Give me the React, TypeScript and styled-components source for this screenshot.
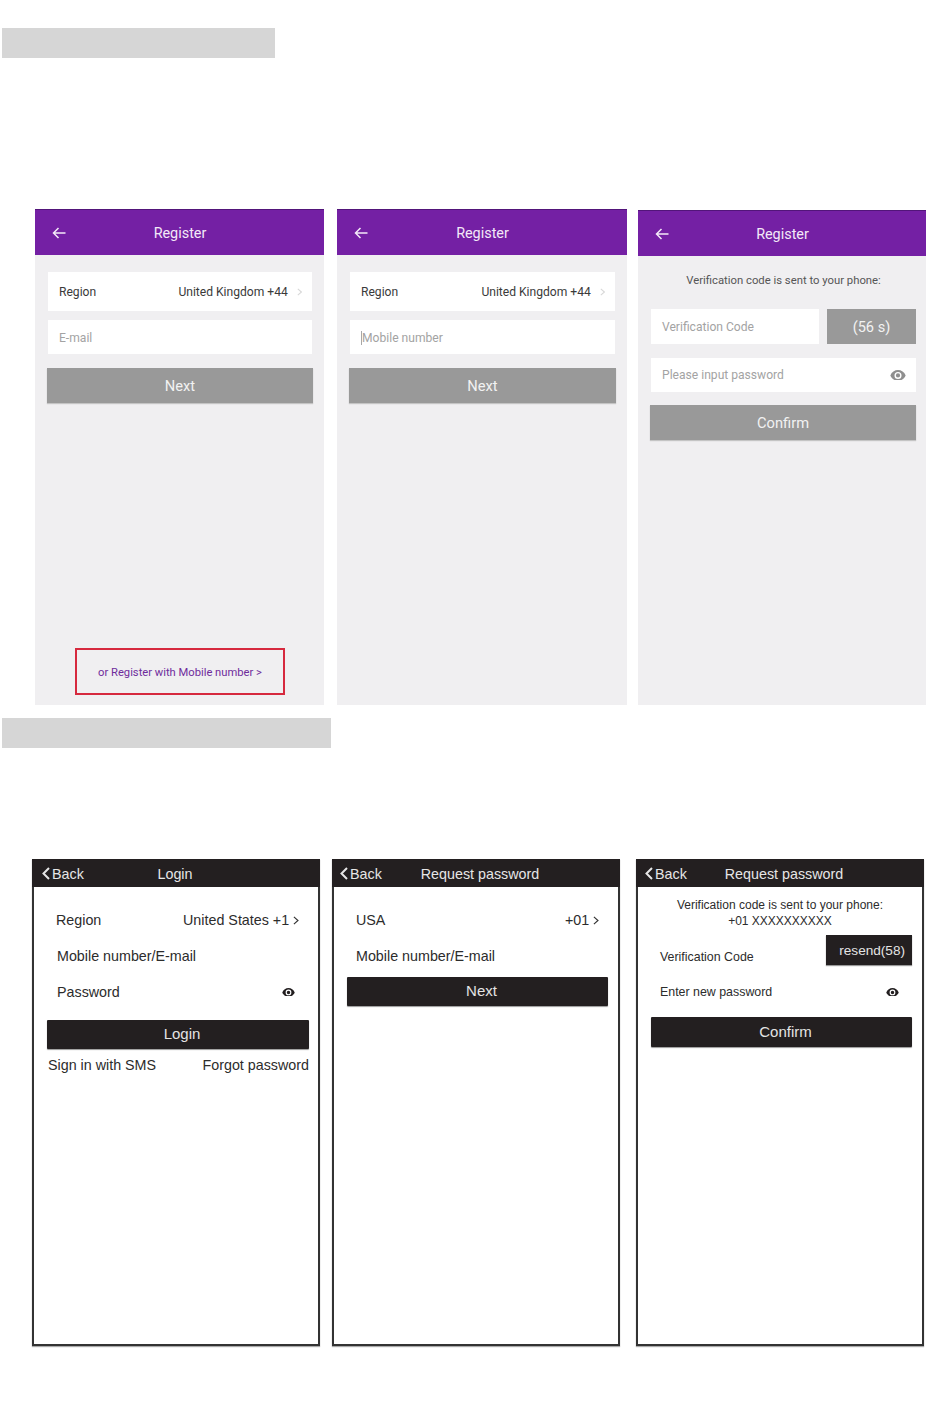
import React from "react";
import styled, { createGlobalStyle } from "styled-components";

const GlobalStyle = createGlobalStyle`
  body {
    margin: 0;
    background: #fff;
  }
`;

const Page = styled.div`
  width: 950px;
  height: 1409px;
  padding-top: 28px;
  box-sizing: border-box;
  overflow: hidden;
`;

const SectionBar = styled.div<{ $width: number }>`
  width: ${(p) => p.$width}px;
  height: 30px;
  margin-left: 2px;
  background: #d6d6d6;
`;

const PurpleRow = styled.div`
  display: flex;
  align-items: flex-start;
  margin: 151px 0 13px 35px;
  font-family: Roboto, "Liberation Sans", sans-serif;
`;

const BlackRow = styled.div`
  display: flex;
  margin: 111px 0 0 32px;
  font-family: "Liberation Sans", Arial, sans-serif;
`;

const PurpleScreen = styled.div<{ $width: number; $gap: number; $top?: number }>`
  position: relative;
  width: ${(p) => p.$width}px;
  height: ${(p) => 496 - (p.$top ?? 0)}px;
  margin-top: ${(p) => p.$top ?? 0}px;
  margin-right: ${(p) => p.$gap}px;
  flex: none;
  background: #f0eff1;
`;

const PurpleHeader = styled.div`
  display: grid;
  grid-template-columns: 1fr auto 1fr;
  align-items: center;
  height: 46px;
  padding-left: 17px;
  padding-right: 17px;
  box-sizing: border-box;
  background: #7420a4;
  border-top: 1px solid #52157a;
  color: #f3e9f8;
  font-size: 14.4px;
`;

const PurpleTitle = styled.span`
  padding: 1px 0 0 1px;
`;

const Stack = styled.div<{ $top: number; $right?: number }>`
  display: flex;
  flex-direction: column;
  padding: ${(p) => p.$top}px ${(p) => p.$right ?? 12}px 0 13px;
`;

const Field = styled.div<{ $height: number; $mb: number }>`
  display: flex;
  align-items: center;
  justify-content: space-between;
  height: ${(p) => p.$height}px;
  margin-bottom: ${(p) => p.$mb}px;
  padding: 0 10px 0 11px;
  box-sizing: border-box;
  background: #fff;
  font-size: 12.1px;
  color: #3a3a3a;
`;

const Placeholder = styled.span<{ $drop?: number }>`
  display: flex;
  align-items: center;
  padding-top: ${(p) => p.$drop ?? 0}px;
  color: #a3a3a3;
`;

const Caret = styled.span`
  width: 1px;
  height: 14px;
  background: #a8a8a8;
`;

const FieldValue = styled.span`
  display: flex;
  align-items: center;
  gap: 9px;
`;

const GreyButton = styled.div<{ $height: number; $flush?: boolean }>`
  display: flex;
  align-items: center;
  justify-content: center;
  height: ${(p) => p.$height}px;
  margin: 0 ${(p) => (p.$flush ? 0 : -1)}px 0 -1px;
  background: #999;
  box-shadow: 0 1px 1px #c4c4c4;
  color: #f2f2f2;
  font-size: 14.7px;
`;

const Notice = styled.div`
  height: 53px;
  padding-top: 18px;
  box-sizing: border-box;
  text-align: center;
  font-size: 11.3px;
  line-height: 14px;
  color: #555;
`;

const CodeRow = styled.div`
  display: flex;
  gap: 8px;
  margin-bottom: 14px;
`;

const CodeInput = styled(Field)`
  flex: 1;
  margin-bottom: 0;
`;

const CountDown = styled.div`
  display: flex;
  align-items: center;
  justify-content: center;
  width: 89px;
  height: 35px;
  background: #999;
  color: #f2f2f2;
  font-size: 14.6px;
`;

const RegisterLink = styled.div`
  position: absolute;
  left: 40px;
  bottom: 10px;
  display: flex;
  align-items: center;
  justify-content: center;
  width: 210px;
  height: 47px;
  padding-top: 1px;
  box-sizing: border-box;
  border: 2px solid #d6293e;
  color: #6f2c9c;
  font-size: 11.2px;
`;

const BlackScreen = styled.div<{ $gap: number }>`
  width: 288px;
  height: 487px;
  margin-right: ${(p) => p.$gap}px;
  flex: none;
  box-sizing: border-box;
  border: 2px solid #333;
  border-top: 0;
  box-shadow: 0 1px 1px #aaa;
  background: #fff;
  color: #2c2c2c;
`;

const BlackHeader = styled.div`
  display: grid;
  grid-template-columns: 1fr auto 1fr;
  align-items: center;
  height: 27px;
  margin: 0 -2px;
  padding: 1px 10px 0;
  background: #231f20;
  color: #e6e6e6;
  font-size: 14.3px;
`;

const Back = styled.span<{ $nudge?: number }>`
  display: flex;
  align-items: center;
  gap: 2px;
  margin-left: ${(p) => p.$nudge ?? 0}px;
`;

const HeaderTitle = styled.span<{ $shift: number }>`
  padding-left: ${(p) => Math.max(p.$shift, 0) * 2}px;
  padding-right: ${(p) => Math.max(-p.$shift, 0) * 2}px;
`;

const BlackBody = styled.div<{ $top: number; $right?: number }>`
  display: flex;
  flex-direction: column;
  padding: ${(p) => p.$top}px ${(p) => p.$right ?? 10}px 0 13px;
`;

const LineRow = styled.div<{ $inset?: number; $height?: number; $lead?: number }>`
  display: flex;
  align-items: center;
  justify-content: space-between;
  height: ${(p) => p.$height ?? 36}px;
  padding: 0 ${(p) => p.$inset ?? 9}px 0 ${(p) => p.$lead ?? 9}px;
  font-size: 14.3px;
`;

const LineValue = styled.span`
  display: flex;
  align-items: center;
  gap: 4px;
`;

const BlackButton = styled.div<{ $mt: number; $height?: number }>`
  display: flex;
  align-items: center;
  justify-content: center;
  height: ${(p) => p.$height ?? 29}px;
  margin-top: ${(p) => p.$mt}px;
  padding: 0 0 2px 8px;
  box-sizing: border-box;
  border-radius: 1px;
  background: #231f20;
  box-shadow: 0 1px 1px #999;
  color: #e4e4e4;
  font-size: 15px;
`;

const Links = styled.div`
  display: flex;
  justify-content: space-between;
  margin: 8px 0 0 1px;
  font-size: 14.3px;
  line-height: 16px;
`;

const PhoneNotice = styled.div`
  padding-top: 10px;
  text-align: center;
  font-size: 12px;
  line-height: 16px;
`;

const CodeLine = styled(LineRow)`
  padding-right: 0;
  font-size: 12.4px;
`;

const CodeLabel = styled.span`
  padding-top: 13px;
`;

const PasswordLine = styled(LineRow)`
  padding-top: 2px;
  font-size: 12.4px;
`;

const ResendButton = styled.div`
  display: flex;
  align-items: center;
  justify-content: flex-end;
  width: 86px;
  height: 30px;
  padding-right: 7px;
  box-sizing: border-box;
  background: #231f20;
  box-shadow: 0 1px 1px #999;
  color: #e4e4e4;
  font-size: 13.6px;
`;

const ArrowLeft = () => (
  <svg width="14" height="12" viewBox="0 0 14 12" fill="none" stroke="#f3e9f8" strokeWidth="1.5">
    <path d="M13.500 6H1.500M6.500 1L1.500 6l5 5" />
  </svg>
);

const Chevron = ({ color = "#d8d8d8", size = 8 }: { color?: string; size?: number }) => (
  <svg width={size * 0.65} height={size} viewBox="0 0 6.500 10" fill="none" stroke={color} strokeWidth="1.300">
    <path d="M1 1l4.500 4L1 9" />
  </svg>
);

const BackChevron = () => (
  <svg width="8" height="13" viewBox="0 0 8 13" fill="none" stroke="#e6e6e6" strokeWidth="2">
    <path d="M7 1L1.500 6.500 7 12" />
  </svg>
);

const Eye = ({ color, width = 16 }: { color: string; width?: number }) => (
  <svg width={width} height={width * 0.68} viewBox="0 0 24 16">
    <path
      fill={color}
      d="M12 0C7 0 2.600 3.100 0.500 8 2.600 12.900 7 16 12 16s9.400-3.100 11.500-8C21.400 3.100 17 0 12 0zm0 13.300A5.300 5.300 0 1 1 12 2.700a5.300 5.300 0 0 1 0 10.600zm0-8.500a3.200 3.200 0 1 0 0 6.400 3.200 3.200 0 0 0 0-6.400z"
    />
  </svg>
);

const RegisterHeader = () => (
  <PurpleHeader>
    <ArrowLeft />
    <PurpleTitle>Register</PurpleTitle>
    <span />
  </PurpleHeader>
);

const BlackTop = ({ title, shift, nudge }: { title: string; shift: number; nudge?: number }) => (
  <BlackHeader>
    <Back $nudge={nudge}>
      <BackChevron />
      Back
    </Back>
    <HeaderTitle $shift={shift}>{title}</HeaderTitle>
    <span />
  </BlackHeader>
);

const App = () => {
  return (
    <Page>
      <GlobalStyle />
      <SectionBar $width={273} />
      <PurpleRow>
        <PurpleScreen $width={289} $gap={13}>
          <RegisterHeader />
          <Stack $top={17}>
            <Field $height={39} $mb={9}>
              <span>Region</span>
              <FieldValue>
                United Kingdom +44
                <Chevron />
              </FieldValue>
            </Field>
            <Field $height={34} $mb={14}>
              <Placeholder $drop={1}>E-mail</Placeholder>
            </Field>
            <GreyButton $height={35}>Next</GreyButton>
          </Stack>
          <RegisterLink>or Register with Mobile number &gt;</RegisterLink>
        </PurpleScreen>
        <PurpleScreen $width={290} $gap={11}>
          <RegisterHeader />
          <Stack $top={17}>
            <Field $height={39} $mb={9}>
              <span>Region</span>
              <FieldValue>
                United Kingdom +44
                <Chevron />
              </FieldValue>
            </Field>
            <Field $height={34} $mb={14}>
              <Placeholder $drop={1}>
                <Caret />
                Mobile number
              </Placeholder>
            </Field>
            <GreyButton $height={35}>Next</GreyButton>
          </Stack>
        </PurpleScreen>
        <PurpleScreen $width={288} $gap={0} $top={1}>
          <RegisterHeader />
          <Stack $top={0} $right={10}>
            <Notice>Verification code is sent to your phone:</Notice>
            <CodeRow>
              <CodeInput $height={35} $mb={0}>
                <Placeholder>Verification Code</Placeholder>
              </CodeInput>
              <CountDown>(56 s)</CountDown>
            </CodeRow>
            <Field $height={34} $mb={13}>
              <Placeholder>Please input password</Placeholder>
              <Eye color="#8f8f8f" />
            </Field>
            <GreyButton $height={35} $flush>
              Confirm
            </GreyButton>
          </Stack>
        </PurpleScreen>
      </PurpleRow>
      <SectionBar $width={329} />
      <BlackRow>
        <BlackScreen $gap={12}>
          <BlackTop title="Login" shift={-1} />
          <BlackBody $top={15} $right={9}>
            <LineRow $inset={10}>
              <span>Region</span>
              <LineValue>
                United States +1
                <Chevron color="#333" size={9} />
              </LineValue>
            </LineRow>
            <LineRow $lead={10}>
              <span>Mobile number/E-mail</span>
            </LineRow>
            <LineRow $inset={14} $lead={10}>
              <span>Password</span>
              <Eye color="#231f20" width={13} />
            </LineRow>
            <BlackButton $mt={10}>Login</BlackButton>
            <Links>
              <span>Sign in with SMS</span>
              <span>Forgot password</span>
            </Links>
          </BlackBody>
        </BlackScreen>
        <BlackScreen $gap={16}>
          <BlackTop title="Request password" shift={4} nudge={-2} />
          <BlackBody $top={15}>
            <LineRow>
              <span>USA</span>
              <LineValue>
                +01
                <Chevron color="#333" size={9} />
              </LineValue>
            </LineRow>
            <LineRow>
              <span>Mobile number/E-mail</span>
            </LineRow>
            <BlackButton $mt={3}>Next</BlackButton>
          </BlackBody>
        </BlackScreen>
        <BlackScreen $gap={0}>
          <BlackTop title="Request password" shift={4} nudge={-1} />
          <PhoneNotice>
            Verification code is sent to your phone:
            <br />
            +01 XXXXXXXXXX
          </PhoneNotice>
          <BlackBody $top={6}>
            <CodeLine $height={30}>
              <CodeLabel>Verification Code</CodeLabel>
              <ResendButton>resend(58)</ResendButton>
            </CodeLine>
            <PasswordLine $inset={13} $height={50}>
              <span>Enter new password</span>
              <Eye color="#231f20" width={13} />
            </PasswordLine>
            <BlackButton $mt={0} $height={30}>
              Confirm
            </BlackButton>
          </BlackBody>
        </BlackScreen>
      </BlackRow>
    </Page>
  );
};

export default App;
